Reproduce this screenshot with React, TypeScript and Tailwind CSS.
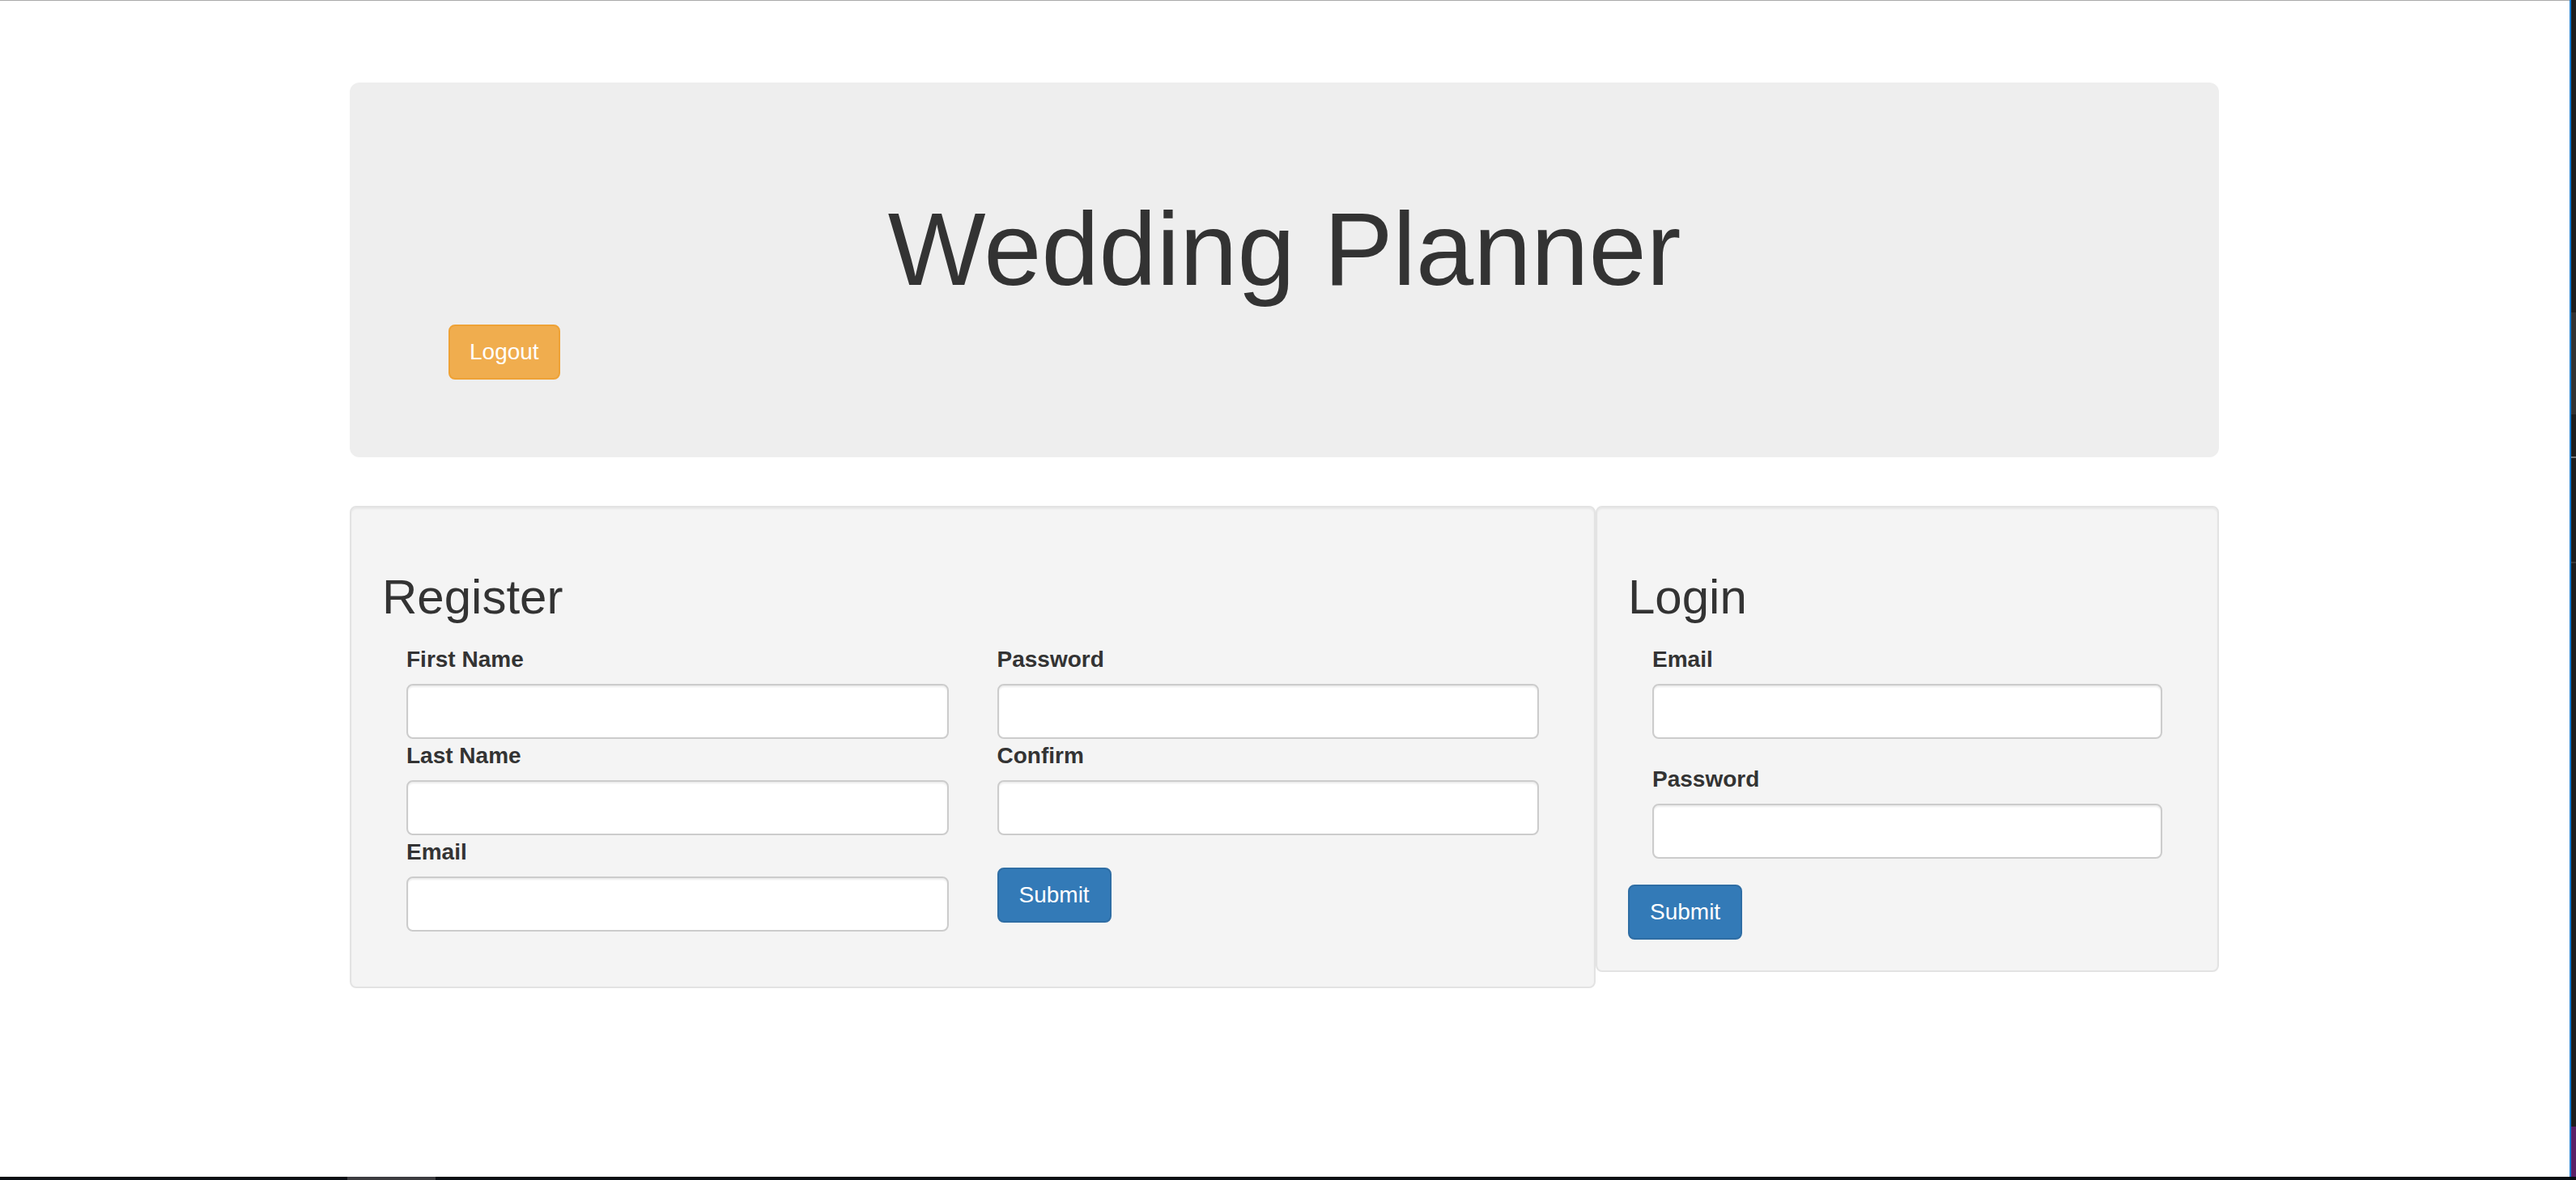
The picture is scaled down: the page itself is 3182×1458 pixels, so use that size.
import React from 'react';

// Campo de formulario estilo bootstrap (a escala 2x)
function Field({ label, type = 'text', className = '' }: { label: string; type?: string; className?: string }) {
  return (
    <div className={className}>
      <label className="block text-[28px] font-bold leading-[40px] mb-[10px]">{label}</label>
      <input
        type={type}
        className="block w-full h-[68px] px-[24px] border-2 border-[#cccccc] rounded-[8px] bg-white shadow-[inset_0_2px_2px_rgba(0,0,0,0.075)] outline-none"
      />
    </div>
  );
}

function SubmitButton() {
  return (
    <button className="h-[68px] px-[25px] border-2 border-[#2e6da4] rounded-[8px] bg-[#337ab7] text-white text-[28px] leading-[40px]">
      Submit
    </button>
  );
}

export default function App() {
  return (
    <div
      className="w-[3182px] h-[1458px] flex flex-col overflow-hidden bg-white text-[#333333]"
      style={{ fontFamily: '"Liberation Sans", Arial, sans-serif' }}
    >
      <div className="flex flex-1 min-h-0">
        {/* página */}
        <div className="flex-1 border-t border-[#a9a9a9] pt-[101px] pl-[432px]">
          <div className="w-[2309px]">
            {/* jumbotron */}
            <div className="rounded-[12px] bg-[#eeeeee] px-[120px] pt-[96px] pb-[96px]">
              <h1 className="text-[128px] leading-[1.1] mt-[40px] mb-[22px] text-center font-normal">Wedding Planner</h1>
              <button className="ml-[2px] h-[68px] px-[24px] border-2 border-[#eea236] rounded-[8px] bg-[#f0ad4e] text-white text-[28px] leading-[40px]">
                Logout
              </button>
            </div>

            <div className="flex items-start mt-[60px]">
              {/* registro */}
              <div className="w-[1539px] border-2 border-[#e3e3e3] bg-[#f4f4f4] rounded-[8px] p-[38px] shadow-[inset_0_2px_2px_rgba(0,0,0,0.05)]">
                <h2 className="text-[60px] leading-[1.1] mt-[40px] mb-[24px] font-normal">Register</h2>
                <div className="grid grid-cols-2">
                  <div className="px-[30px] mb-[30px] flex flex-col gap-[1px]">
                    <Field label="First Name" />
                    <Field label="Last Name" />
                    <Field label="Email" type="email" />
                  </div>
                  <div className="px-[30px] flex flex-col items-start gap-[1px]">
                    <Field label="Password" type="password" className="w-full" />
                    <Field label="Confirm" type="password" className="w-full" />
                    <div className="mt-[39px]">
                      <SubmitButton />
                    </div>
                  </div>
                </div>
              </div>

              {/* login */}
              <div className="flex-1 border-2 border-[#e3e3e3] bg-[#f4f4f4] rounded-[8px] p-[38px] shadow-[inset_0_2px_2px_rgba(0,0,0,0.05)]">
                <h2 className="text-[60px] leading-[1.1] mt-[40px] mb-[24px] font-normal">Login</h2>
                <div className="px-[30px]">
                  <Field label="Email" type="email" className="mb-[30px]" />
                  <Field label="Password" type="password" className="mb-[32px]" />
                </div>
                <SubmitButton />
              </div>
            </div>
          </div>
        </div>

        {/* borde de ventana a la derecha */}
        <div className="w-[2px] bg-[#1a7fd4]" />
        <div className="w-[6px] bg-[#1e1e1e] flex flex-col">
          <div className="h-[386px]" />
          <div className="h-[126px] bg-[#333333]" />
          <div className="h-[52px]" />
          <div className="h-[2px] bg-[#7a7a7a]" />
          <div className="h-[128px]" />
          <div className="h-[2px] bg-[#3a3a3a]" />
          <div className="flex-1" />
          <div className="h-[62px] bg-[#5b2168]" />
        </div>
      </div>

      {/* barra inferior */}
      <div className="h-[4px] bg-[#0a0e14] flex">
        <div className="ml-[429px] w-[109px] bg-[#3c3c40]" />
      </div>
    </div>
  );
}
